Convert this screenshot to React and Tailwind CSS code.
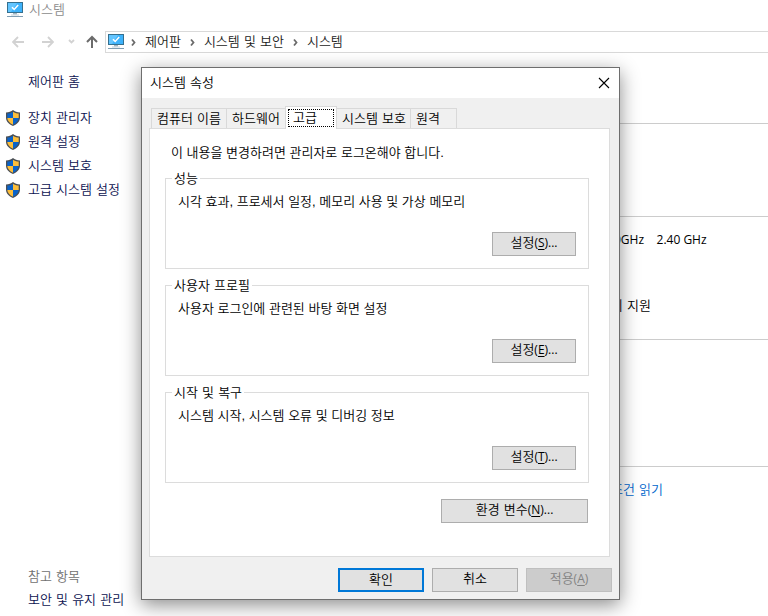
import React, { useState } from 'react';

const tabs = [
    { id: 'name', label: '컴퓨터 이름', width: 'w-[76px]' },
    { id: 'hardware', label: '하드웨어', width: 'w-[60px]' },
    { id: 'advanced', label: '고급', width: 'w-[52px]' },
    { id: 'protection', label: '시스템 보호', width: 'w-[75px]' },
    { id: 'remote', label: '원격', width: 'w-[47px]' },
];

const sections = [
    { title: '성능', text: '시각 효과, 프로세서 일정, 메모리 사용 및 가상 메모리', hotkey: 'S' },
    { title: '사용자 프로필', text: '사용자 로그인에 관련된 바탕 화면 설정', hotkey: 'E' },
    { title: '시작 및 복구', text: '시스템 시작, 시스템 오류 및 디버깅 정보', hotkey: 'T' },
];

const sideLinks = ['장치 관리자', '원격 설정', '시스템 보호', '고급 시스템 설정'];
const crumbs = ['제어판', '시스템 및 보안', '시스템'];

function MonitorIcon() {
    return (
        <svg width="16" height="16" viewBox="0 0 16 16" className="shrink-0" aria-hidden="true">
            <rect x="0.5" y="0.5" width="15" height="10" fill="#3db2fb" stroke="#35708f" />
            <path d="M1 1h9L4 10H1z" fill="#63c5ff" />
            <path d="M5 5.2l2.2 2.3L11.2 3" fill="none" stroke="#fff" strokeWidth="1.5" />
            <path d="M6 11h4v1.5H6z" fill="#9fb4c2" />
            <path d="M4 12.5h8v1H4z" fill="#c3d1db" />
            <path d="M0 14h16v1H0z" fill="#7f9db2" />
        </svg>
    );
}

function ShieldIcon() {
    return (
        <svg width="14" height="16" viewBox="0 0 14 16" className="shrink-0" aria-hidden="true">
            <path d="M7 0C5.200 1.600 2.900 2.400 0 2.500v5C0 11.500 2.800 14.300 7 16c4.200-1.700 7-4.500 7-8.500v-5C11.100 2.400 8.800 1.600 7 0z" fill="#4b4f54" />
            <path d="M7 1.700V8H1.300V3.600C3.600 3.400 5.500 2.800 7 1.700z" fill="#0a63c9" />
            <path d="M7 1.700V8h5.700V3.600C10.400 3.400 8.500 2.800 7 1.700z" fill="#fdbe3a" />
            <path d="M1.300 8H7v6.700C3.600 13.200 1.400 10.900 1.300 8z" fill="#fdbe3a" />
            <path d="M12.700 8H7v6.700c3.400-1.500 5.600-3.800 5.700-6.700z" fill="#0a63c9" />
        </svg>
    );
}

function Crumb({ label }) {
    return (
        <li className="flex items-center">
            <svg width="18" height="16" viewBox="0 0 18 16" className="mr-[3px]" aria-hidden="true">
                <path d="M8 5.500l2.500 3-2.500 3" fill="none" stroke="#6b6b6b" strokeWidth="1.800" />
            </svg>
            <a href="#" className="mr-[2px] text-[#1a1a1a]">{label}</a>
        </li>
    );
}

function NavButton({ label, className, width, children }) {
    return (
        <button type="button" aria-label={label} className={className}>
            <svg width={width} height="14" viewBox={`0 0 ${width} 14`} fill="none" stroke="currentColor">
                {children}
            </svg>
        </button>
    );
}

function DialogButton({ label, hotkey, more, className = 'border border-[#adadad] bg-[#e1e1e1]', width, disabled }) {
    return (
        <button type="button" disabled={disabled} className={`h-6 shrink-0 pb-[2px] leading-5 ${width} ${className}`}>
            {label}
            {hotkey && (
                <span className="font-['Open_Sans',sans-serif] text-xs font-normal">
                    (<u className="underline-offset-2">{hotkey}</u>){more && '...'}
                </span>
            )}
        </button>
    );
}

function SystemProperties() {
    const [active, setActive] = useState('advanced');

    return (
        <div
            role="dialog"
            aria-labelledby="dialog-title"
            className="absolute left-[141px] top-[67px] w-[479px] border border-[#6e6e6e] bg-[#f0f0f0] shadow-[0_5px_18px_rgba(0,0,0,0.45)]"
        >
            <div className="flex h-[30px] items-center justify-between bg-white pl-2 pr-[9px]">
                <h2 id="dialog-title">시스템 속성</h2>
                <button type="button" aria-label="닫기">
                    <svg width="12" height="12" viewBox="0 0 12 12" stroke="#000" strokeWidth="1.100">
                        <path d="M1 1l10 10M11 1L1 11" />
                    </svg>
                </button>
            </div>

            <div className="pb-[7px] pl-[7px] pr-[9px] pt-2">
                <div role="tablist" className="flex items-end pl-[2px]">
                    {tabs.map((tab) => {
                        const selected = tab.id === active;
                        return (
                            <button
                                key={tab.id}
                                type="button"
                                role="tab"
                                aria-selected={selected}
                                onClick={() => setActive(tab.id)}
                                className={`-mr-px border border-b-0 border-[#d9d9d9] text-left whitespace-nowrap last:mr-0 ${tab.width} ${
                                    selected
                                        ? 'z-10 -mb-px h-[23px] bg-white px-[2px] pb-[3px] pt-[2px]'
                                        : 'h-5 bg-[#f0f0f0] pl-[5px] leading-[18px]'
                                }`}
                            >
                                {selected ? (
                                    <span className="block h-[18px] border border-dotted border-black pl-1 leading-4">{tab.label}</span>
                                ) : (
                                    tab.label
                                )}
                            </button>
                        );
                    })}
                </div>

                <div role="tabpanel" className="border border-[#dcdcdc] bg-white pb-[33px] pl-[15px] pr-5 pt-4">
                    <p className="mb-2 pl-[6px] font-['Liberation_Sans','Noto_Sans_CJK_KR',sans-serif]">
                        이 내용을 변경하려면 관리자로 로그온해야 합니다.
                    </p>

                    {sections.map((section) => (
                        <fieldset key={section.title} className="mb-[7px] border border-[#dcdcdc] pb-3 pr-3">
                            <legend className="ml-[6px] px-[2px] pt-[2px]">{section.title}</legend>
                            <p className="mb-[22px] pl-3 pt-[7px] font-['Liberation_Sans','Noto_Sans_CJK_KR',sans-serif]">
                                {section.text}
                            </p>
                            <div className="flex justify-end">
                                <DialogButton label="설정" hotkey={section.hotkey} more width="w-[84px]" />
                            </div>
                        </fieldset>
                    ))}

                    <div className="flex justify-end pr-px pt-[9px]">
                        <DialogButton label="환경 변수" hotkey="N" more width="w-[147px]" />
                    </div>
                </div>
            </div>

            <div className="flex justify-end gap-2 px-[7px] pb-[7px] pt-1">
                <DialogButton label="확인" width="w-[86px]" className="border-2 border-[#0078d7] bg-[#e1e1e1]" />
                <DialogButton label="취소" width="w-[86px]" />
                <DialogButton
                    label="적용"
                    hotkey="A"
                    width="w-[86px]"
                    disabled
                    className="border border-[#bfbfbf] bg-[#cccccc] text-[#838383]"
                />
            </div>
        </div>
    );
}

export default function App() {
    return (
        <div className="relative flex min-h-screen flex-col overflow-hidden bg-white font-['DejaVu_Sans','Noto_Sans_CJK_KR',sans-serif] text-[13px] font-[350] leading-4 text-black">
            <header>
                <div className="flex h-[19px] items-center gap-[6px] pl-[7px] text-[#8c8c8c]">
                    <MonitorIcon />
                    <h1>시스템</h1>
                </div>

                <div className="mt-3 flex h-[22px] items-center">
                    <nav aria-label="탐색" className="flex items-center pl-3 pr-[7px]">
                        <NavButton label="뒤로" width={12} className="mr-[18px] text-[#d2d2d2]">
                            <path d="M12 7H1M6 2L1 7l5 5" strokeWidth="1.800" />
                        </NavButton>
                        <NavButton label="앞으로" width={12} className="mr-[14px] text-[#d2d2d2]">
                            <path d="M0 7h11M6 2l5 5-5 5" strokeWidth="1.800" />
                        </NavButton>
                        <NavButton label="최근 위치" width={7} className="mr-[11px] text-[#d2d2d2]">
                            <path d="M1 5l2.500 2.500L6 5" strokeWidth="1.800" />
                        </NavButton>
                        <NavButton label="위로" width={12} className="text-[#6b6b6b]">
                            <path d="M6 13V2M1 7l5-5 5 5" strokeWidth="2" />
                        </NavButton>
                    </nav>
                    <ol className="flex h-full flex-1 items-center border border-r-0 border-[#d9d9d9] pl-[2px]">
                        <li><MonitorIcon /></li>
                        {crumbs.map((label) => <Crumb key={label} label={label} />)}
                    </ol>
                </div>
            </header>

            <div className="flex flex-1">
                <aside className="flex w-[141px] shrink-0 flex-col justify-between pb-2 pt-[21px] text-[#0b1150]">
                    <div>
                        <a href="#" className="ml-7">제어판 홈</a>
                        <ul className="mt-5 space-y-2 pl-[6px]">
                            {sideLinks.map((label) => (
                                <li key={label}>
                                    <a href="#" className="flex items-center gap-2">
                                        <ShieldIcon />
                                        {label}
                                    </a>
                                </li>
                            ))}
                        </ul>
                    </div>
                    <div className="pl-7">
                        <p className="mb-[7px] text-[#707070]">참고 항목</p>
                        <a href="#">보안 및 유지 관리</a>
                    </div>
                </aside>

                <main className="flex-1 pt-[70px]">
                    <hr className="border-[#cccccc]" />
                    <div className="h-[92px]" />
                    <hr className="border-[#cccccc]" />
                    <div className="flex h-[122px] flex-col gap-[50px] pl-[470px] pt-[15px]">
                        <p className="whitespace-pre pl-[3px] font-['Open_Sans',sans-serif] text-xs font-normal leading-4">0GHz    2.40 GHz</p>
                        <p>의 지원</p>
                    </div>
                    <hr className="border-[#cccccc]" />
                    <div className="h-[126px]" />
                    <hr className="border-[#cccccc]" />
                    <a href="#" className="ml-[470px] mt-[15px] block text-[#0066cc]">조건 읽기</a>
                </main>
            </div>

            <SystemProperties />
        </div>
    );
}
